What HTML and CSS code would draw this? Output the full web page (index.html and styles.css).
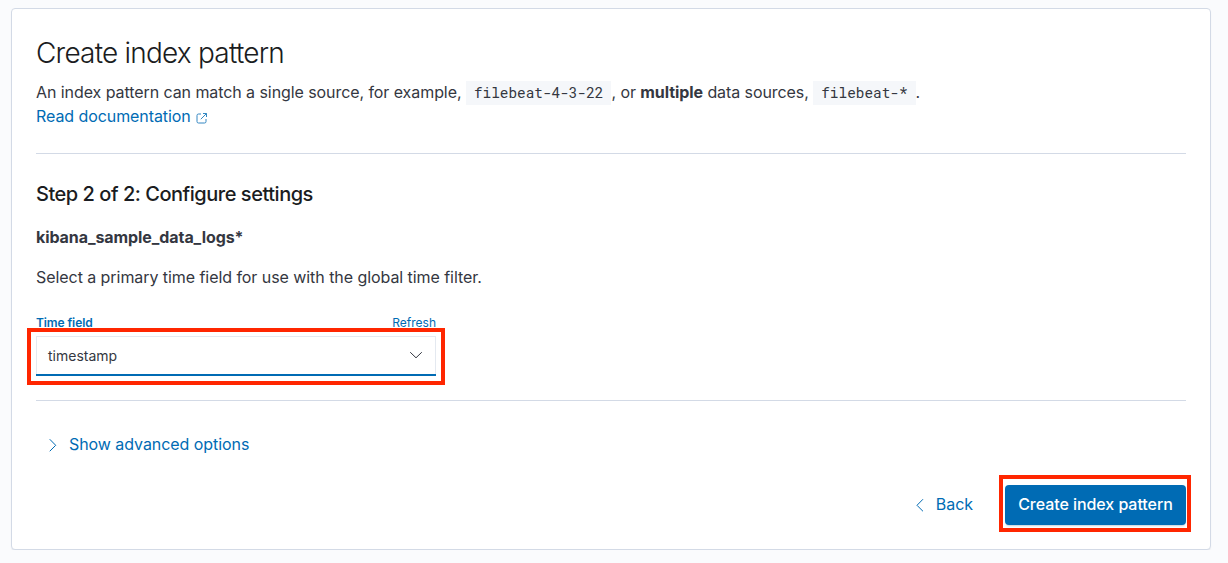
FILE: index.html
```html
<!DOCTYPE html>
<html lang="en">
<head>
<meta charset="utf-8">
<title>Create index pattern</title>
<link rel="stylesheet" href="styles.css">
</head>
<body>
<main class="panel">
  <h1 class="title">Create index pattern</h1>
  <p class="text intro">An index pattern can match a single source, for example, <code class="code">filebeat-4-3-22</code>, or <strong>multiple</strong> data sources, <code class="code">filebeat-*</code>.<br><a class="link" href="#">Read documentation<svg class="external" width="12" height="12" viewBox="0 0 12 12" fill="none" stroke="currentColor"><path d="M5 2H2.500A1.500 1.500 0 0 0 1 3.500V9.500A1.500 1.500 0 0 0 2.500 11H8.500A1.500 1.500 0 0 0 10 9.500V7"/><path d="M7 1.500H10.500V5M10.500 1.500L4.800 7.200"/></svg></a></p>
  <hr class="rule">
  <h2 class="step">Step 2 of 2: Configure settings</h2>
  <p class="text pattern"><strong>kibana_sample_data_logs*</strong></p>
  <p class="text hint">Select a primary time field for use with the global time filter.</p>
  <div class="field">
    <div class="labels"><label class="label">Time field</label><a class="link" href="#">Refresh</a></div>
    <div class="select"><span>timestamp</span><svg width="16" height="16" viewBox="0 0 16 16" fill="none" stroke="currentColor" stroke-linecap="round" stroke-linejoin="round"><path d="M2.500 4.500L8 9.800L13.500 4.500"/></svg>
      <span class="highlight highlight-select"></span></div>
  </div>
  <hr class="rule">
  <button class="plain advanced"><svg width="16" height="16" viewBox="0 0 16 16" fill="none" stroke="currentColor" stroke-linecap="round" stroke-linejoin="round"><path d="M5 2.500L10.700 8.300L5 14"/></svg><span class="button-text">Show advanced options</span></button>
  <div class="actions">
    <button class="plain back"><svg width="16" height="16" viewBox="0 0 16 16" fill="none" stroke="currentColor" stroke-linecap="round" stroke-linejoin="round"><path d="M10.700 2.500L5 8.300L10.700 14"/></svg><span class="button-text">Back</span></button>
    <button class="primary"><span class="button-text">Create index pattern</span><span class="highlight highlight-button"></span></button>
  </div>
</main>
</body>
</html>
```
FILE: styles.css
```css
* { box-sizing: border-box; }
body {
  margin: 0;
  padding: 8px 17px 0 11px;
  background: #fafbfd;
  color: #343741;
  font: 400 16px/24px Inter, sans-serif;
  letter-spacing: -0.06px;
  overflow: hidden;
}
h1, h2, p { margin: 0; }
.panel {
  height: 542px;
  padding: 24px;
  background: #fff;
  border: 1px solid #d3dae6;
  border-radius: 4px;
  box-shadow: 0 2px 2px -1px rgba(152, 162, 179, 0.3);
}
.title {
  color: #1a1c21;
  font-size: 28px;
  font-weight: 300;
  line-height: 40px;
  letter-spacing: -0.79px;
}
.intro { margin-top: 7px; height: 49px; white-space: nowrap; letter-spacing: -0.075px; }
.text strong { font-weight: 700; }
.code {
  display: inline-block;
  height: 24px;
  vertical-align: top;
  padding: 0 8px;
  background: #f5f7fa;
  font: 14.4px/24px "Roboto Mono", "DejaVu Sans Mono", monospace;
  letter-spacing: 0;
  transform: translateY(1px);
}
.link { color: #006bb4; text-decoration: none; }
.external { margin-left: 5px; vertical-align: -2px; opacity: 0.8; }
.rule { height: 1px; margin: 24px 0; border: 0; background: #d3dae6; }
.step {
  color: #1a1c21;
  font-size: 20px;
  font-weight: 500;
  line-height: 32px;
  letter-spacing: -0.47px;
}
.pattern { margin-top: 15px; letter-spacing: -0.08px; }
.hint { margin-top: 16px; }
.field { width: 400px; padding-top: 25px; }
.labels {
  display: flex;
  justify-content: space-between;
  height: 22px;
  font-size: 12px;
  line-height: 18px;
  letter-spacing: 0;
}
.label { color: #006bb4; font-weight: 600; letter-spacing: -0.1px; }
.select {
  position: relative;
  display: flex;
  align-items: center;
  justify-content: space-between;
  height: 40px;
  padding: 0 12px 1px;
  box-shadow: inset 0 -2px #006bb4, inset 0 0 0 1px #e4e9f0;
  font-size: 14px;
  letter-spacing: 0;
}
.highlight { position: absolute; border: 4px solid #ff2600; pointer-events: none; }
.highlight-select { inset: -8px -9px -9px; }
.plain, .primary {
  display: flex;
  align-items: center;
  height: 40px;
  border: 0;
  background: none;
  color: #006bb4;
  font: inherit;
  letter-spacing: inherit;
}
.plain { gap: 8px; padding: 0; }
.button-text { padding-bottom: 2px; }
.advanced { padding-left: 9px; }
.actions { display: flex; justify-content: flex-end; gap: 32px; margin-top: 20px; }
.primary {
  position: relative;
  justify-content: center;
  width: 181px;
  padding: 0;
  border-radius: 4px;
  background: #006bb4;
  color: #fff;
  font-weight: 500;
  white-space: nowrap;
  box-shadow: 0 2px 2px -1px rgba(54, 97, 126, 0.3);
}
.highlight-button { inset: -10px -5px -7px -6px; }
```
